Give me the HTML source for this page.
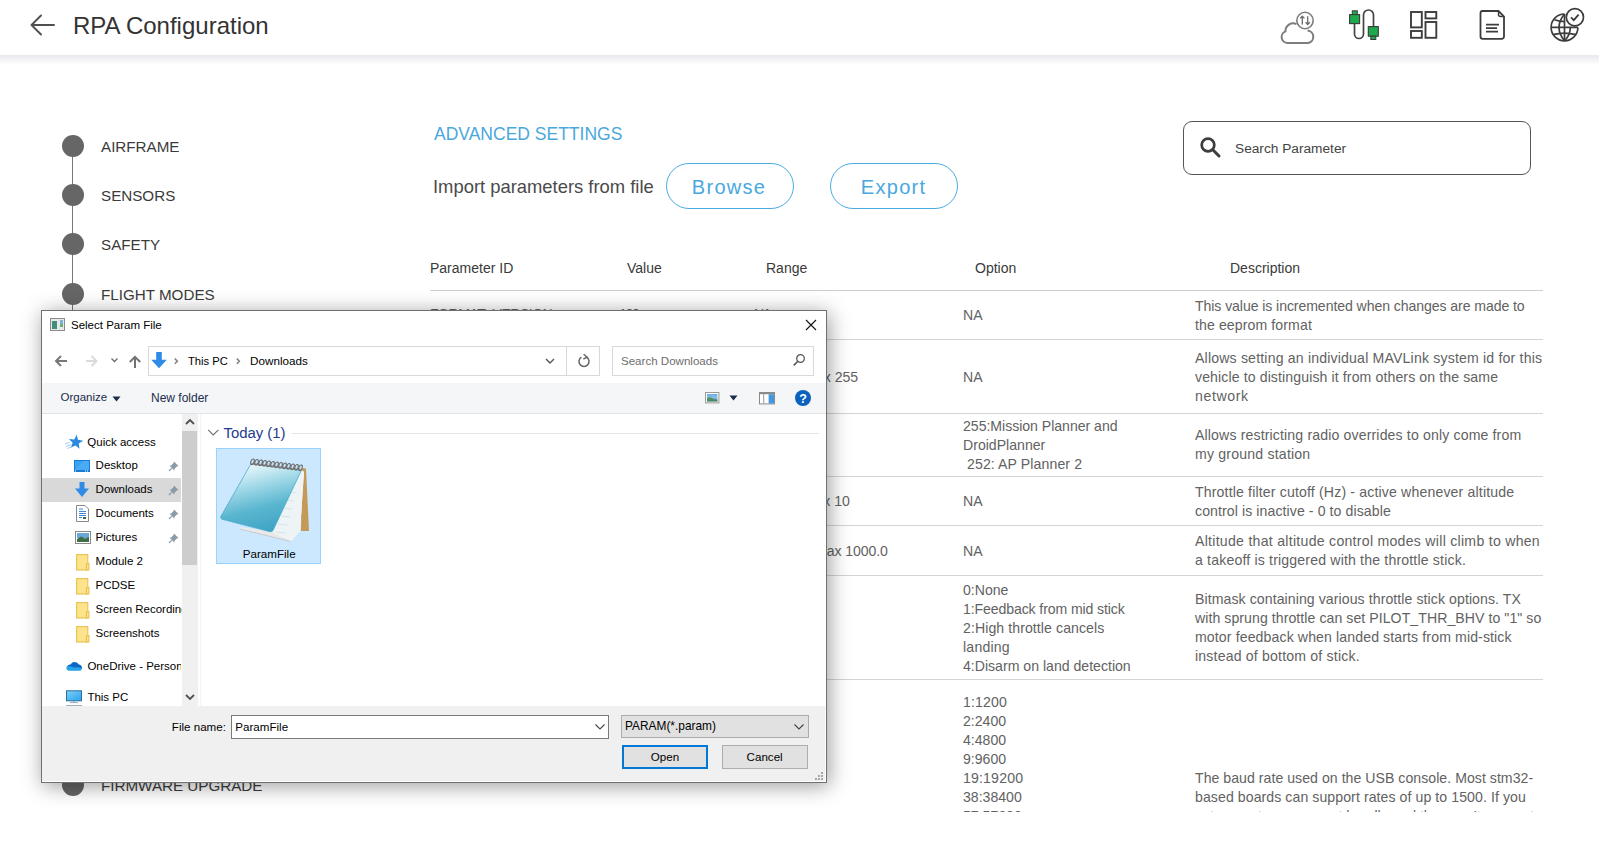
<!DOCTYPE html>
<html><head><meta charset="utf-8">
<style>
*{box-sizing:border-box}
html,body{margin:0;padding:0;width:1599px;height:863px;overflow:hidden;background:#fff;font-family:"Liberation Sans",sans-serif}
.t{position:absolute;line-height:1;white-space:nowrap}
#hdr{position:absolute;left:0;top:0;width:1599px;height:55px;background:#fff}
#hshadow{position:absolute;left:0;top:55px;width:1599px;height:10px;background:linear-gradient(#e8e8ee,#f1f1f5 40%,#fbfbfc 80%,#fff)}
.dot{position:absolute;left:62px;width:22px;height:22px;border-radius:50%;background:#666}
.vline{position:absolute;left:72px;width:1.2px;background:#777}
.side{font-size:15.2px;color:#3b3b3b;left:101px}
.hd{font-size:14px;color:#3a3a3a}
.c{font-size:14.1px;color:#626262}
.rl{position:absolute;left:430px;width:1113px;height:1px;background:#d4d4d4}
.d{font-size:11.5px;color:#000}
.pill{position:absolute;top:163px;height:46px;border:1.5px solid #4aaae0;border-radius:23px}
</style></head><body>
<div id="hdr"></div>
<div id="hshadow"></div>
<!-- back arrow -->
<svg style="position:absolute;left:28px;top:12px" width="30" height="28" viewBox="0 0 30 28">
<path d="M3.5 13H26 M13 3.5L3.5 13L13 22.5" fill="none" stroke="#505050" stroke-width="1.9" stroke-linecap="round" stroke-linejoin="round"/>
</svg>
<svg style="position:absolute;left:1270px;top:0" width="329" height="55" viewBox="1270 0 329 55">
<!-- cloud -->
<path d="M1288 43H1308A6.3 6.3 0 0 0 1307.5 30.5 M1296.5 24.2A7.6 7.6 0 0 0 1285.5 31.4A6 6 0 0 0 1288 43" fill="none" stroke="#7d7d7d" stroke-width="2"/>
<circle cx="1305" cy="20.5" r="8.2" fill="#fff" stroke="#7d7d7d" stroke-width="1.6"/>
<path d="M1302.3 24.5V16.2 M1300.2 18.4L1302.3 16.2L1304.4 18.4 M1307.7 16.2V24.5 M1305.6 22.3L1307.7 24.5L1309.8 22.3" fill="none" stroke="#6b6b6b" stroke-width="1.3"/>
<!-- cable -->
<path d="M1354.5 24V34A4.5 4.5 0 0 0 1363.5 34V15A5 5 0 0 1 1373.5 15V27" fill="none" stroke="#444" stroke-width="1.7"/>
<rect x="1352.3" y="10.8" width="5" height="4" fill="#1caa4c" stroke="#3a3a3a" stroke-width="1"/>
<rect x="1349.6" y="14.6" width="10" height="9" fill="#1caa4c" stroke="#3a3a3a" stroke-width="1.1"/>
<rect x="1368.3" y="26.6" width="10" height="9.6" fill="#1caa4c" stroke="#3a3a3a" stroke-width="1.1"/>
<rect x="1370.8" y="36.2" width="5" height="3.3" fill="#1caa4c" stroke="#3a3a3a" stroke-width="1"/>
<!-- dashboard -->
<g fill="none" stroke="#3d3d3d" stroke-width="1.9">
<rect x="1411" y="12" width="10.8" height="15.4"/>
<rect x="1411" y="31" width="10.8" height="6.8"/>
<rect x="1425.5" y="12" width="10.8" height="6.4"/>
<rect x="1425.5" y="22" width="10.8" height="15.8"/>
</g>
<!-- document -->
<path d="M1482.5 11H1498.5L1504 16.5V36.5A2.3 2.3 0 0 1 1501.7 38.8H1482.8A2.3 2.3 0 0 1 1480.5 36.5V13A2 2 0 0 1 1482.5 11Z" fill="none" stroke="#3d3d3d" stroke-width="1.8"/>
<path d="M1498.5 11V14.5A2 2 0 0 0 1500.5 16.5H1504" fill="none" stroke="#3d3d3d" stroke-width="1.5"/>
<path d="M1486 24.6H1499M1486 28.1H1497M1486 31.6H1498" stroke="#3d3d3d" stroke-width="1.6"/>
<!-- globe -->
<g fill="none" stroke="#3d3d3d" stroke-width="1.7">
<path d="M1564.5 14A13.4 13.4 0 1 0 1577.9 27.4"/>
<path d="M1564.5 14V40.8 M1551.1 27.4H1577.9"/>
<path d="M1564.5 14Q1553.5 27.4 1564.5 40.8"/>
<path d="M1570.3 27.4Q1570.3 35 1564.5 40.8"/>
<path d="M1554.5 19.8Q1559.5 21.6 1564.5 21.6"/>
<path d="M1553 34.6Q1564.5 31.5 1576 34.6"/>
</g>
<circle cx="1574.9" cy="17.3" r="8.6" fill="#fff" stroke="#3d3d3d" stroke-width="1.7"/>
<path d="M1571 17.4L1573.8 20.2L1578.6 14.6" fill="none" stroke="#3d3d3d" stroke-width="1.8"/>
</svg>
<div class="t" style="left:73px;top:14.3px;font-size:24px;color:#333">RPA Configuration</div>

<!-- sidebar -->
<div class="vline" style="top:150px;height:640px"></div>
<div class="dot" style="top:135px"></div>
<div class="dot" style="top:184px"></div>
<div class="dot" style="top:233.4px"></div>
<div class="dot" style="top:282.6px"></div>
<div class="dot" style="top:774px"></div>
<div class="t side" style="top:139px">AIRFRAME</div>
<div class="t side" style="top:188.2px">SENSORS</div>
<div class="t side" style="top:237.4px">SAFETY</div>
<div class="t side" style="top:286.6px">FLIGHT MODES</div>
<div class="t side" style="top:778px">FIRMWARE UPGRADE</div>

<!-- main -->
<div class="t" style="left:434px;top:125.7px;font-size:17.5px;color:#4aa8dc">ADVANCED SETTINGS</div>
<div class="t" style="left:433px;top:178.4px;font-size:18.4px;color:#4a4a4a">Import parameters from file</div>
<div class="pill" style="left:666px;width:128px"></div>
<div class="pill" style="left:830px;width:128px"></div>
<div class="t" style="left:691.8px;top:177px;font-size:20px;letter-spacing:1.3px;color:#49a8dd">Browse</div>
<div class="t" style="left:860.8px;top:177px;font-size:20px;letter-spacing:1.3px;color:#49a8dd">Export</div>

<div style="position:absolute;left:1183px;top:121px;width:348px;height:54px;border:1px solid #555;border-radius:9px"></div>
<svg style="position:absolute;left:1198px;top:136px" width="26" height="24" viewBox="0 0 26 24">
<circle cx="10" cy="9" r="6.3" fill="none" stroke="#3d3d3d" stroke-width="2.7"/>
<path d="M14.8 13.8L21 20" stroke="#3d3d3d" stroke-width="3" stroke-linecap="round"/>
</svg>
<div class="t" style="left:1235px;top:141.6px;font-size:13.7px;color:#444">Search Parameter</div>

<!-- table header -->
<div class="t hd" style="left:430px;top:260.8px">Parameter ID</div>
<div class="t hd" style="left:627px;top:260.8px">Value</div>
<div class="t hd" style="left:766px;top:260.8px">Range</div>
<div class="t hd" style="left:975px;top:260.8px">Option</div>
<div class="t hd" style="left:1230px;top:260.8px">Description</div>
<div class="rl" style="top:290px;background:#cfcfcf"></div>

<div id="rows" style="position:absolute;left:0;top:0;width:1599px;height:812px;overflow:hidden">
<div class="rl" style="top:339px"></div>
<div class="rl" style="top:413px"></div>
<div class="rl" style="top:476px"></div>
<div class="rl" style="top:525px"></div>
<div class="rl" style="top:575px"></div>
<div class="rl" style="top:679px"></div>
<div class="t c" style="left:430px;top:307.0px;letter-spacing:-0.533px">FORMAT_VERSION</div>
<div class="t c" style="left:619px;top:307.0px;letter-spacing:-1.358px">120</div>
<div class="t c" style="left:754px;top:307.0px;letter-spacing:-1.794px">NA</div>
<div class="t c" style="left:963px;top:308.0px">NA</div>
<div class="t c" style="left:1195px;top:298.8px;letter-spacing:-0.083px">This value is incremented when changes are made to</div>
<div class="t c" style="left:1195px;top:317.8px;letter-spacing:0.103px">the eeprom format</div>
<div class="t c" style="left:430px;top:370.1px">SYSID_THISMAV</div>
<div class="t c" style="left:627px;top:370.1px">1</div>
<div class="t c" style="left:766px;top:370.1px;letter-spacing:-0.020px">Min 1 Max 255</div>
<div class="t c" style="left:963px;top:370.1px">NA</div>
<div class="t c" style="left:1195px;top:350.9px;letter-spacing:0.179px">Allows setting an individual MAVLink system id for this</div>
<div class="t c" style="left:1195px;top:369.9px;letter-spacing:0.111px">vehicle to distinguish it from others on the same</div>
<div class="t c" style="left:1195px;top:388.9px;letter-spacing:0.607px">network</div>
<div class="t c" style="left:430px;top:437.8px">SYSID_MYGCS</div>
<div class="t c" style="left:627px;top:437.8px">255</div>
<div class="t c" style="left:766px;top:437.8px">NA</div>
<div class="t c" style="left:963px;top:418.8px;letter-spacing:-0.025px">255:Mission Planner and</div>
<div class="t c" style="left:963px;top:437.8px;letter-spacing:0.003px">DroidPlanner</div>
<div class="t c" style="left:963px;top:456.8px;letter-spacing:0.101px">&nbsp;252: AP Planner 2</div>
<div class="t c" style="left:1195px;top:428.2px;letter-spacing:0.145px">Allows restricting radio overrides to only come from</div>
<div class="t c" style="left:1195px;top:447.2px;letter-spacing:0.198px">my ground station</div>
<div class="t c" style="left:430px;top:493.8px">PILOT_THR_FILT</div>
<div class="t c" style="left:627px;top:493.8px">0</div>
<div class="t c" style="left:766px;top:493.8px;letter-spacing:-0.074px">Min 0 Max 10</div>
<div class="t c" style="left:963px;top:493.8px">NA</div>
<div class="t c" style="left:1195px;top:485.0px;letter-spacing:0.158px">Throttle filter cutoff (Hz) - active whenever altitude</div>
<div class="t c" style="left:1195px;top:504.0px;letter-spacing:0.093px">control is inactive - 0 to disable</div>
<div class="t c" style="left:430px;top:543.9px">PILOT_TKOFF_ALT</div>
<div class="t c" style="left:627px;top:543.9px">0</div>
<div class="t c" style="left:766px;top:543.9px;letter-spacing:-0.117px">Min 0.0 Max 1000.0</div>
<div class="t c" style="left:963px;top:543.9px">NA</div>
<div class="t c" style="left:1195px;top:534.0px;letter-spacing:0.276px">Altitude that altitude control modes will climb to when</div>
<div class="t c" style="left:1195px;top:553.0px;letter-spacing:0.171px">a takeoff is triggered with the throttle stick.</div>
<div class="t c" style="left:963px;top:582.7px;letter-spacing:-0.011px">0:None</div>
<div class="t c" style="left:963px;top:601.7px;letter-spacing:-0.112px">1:Feedback from mid stick</div>
<div class="t c" style="left:963px;top:620.7px;letter-spacing:0.084px">2:High throttle cancels</div>
<div class="t c" style="left:963px;top:639.7px;letter-spacing:0.205px">landing</div>
<div class="t c" style="left:963px;top:658.7px;letter-spacing:0.002px">4:Disarm on land detection</div>
<div class="t c" style="left:1195px;top:591.9px;letter-spacing:0.081px">Bitmask containing various throttle stick options. TX</div>
<div class="t c" style="left:1195px;top:610.9px;letter-spacing:0.066px">with sprung throttle can set PILOT_THR_BHV to "1" so</div>
<div class="t c" style="left:1195px;top:629.9px;letter-spacing:0.119px">motor feedback when landed starts from mid-stick</div>
<div class="t c" style="left:1195px;top:648.9px;letter-spacing:0.184px">instead of bottom of stick.</div>
<div class="t c" style="left:430px;top:620.5px">PILOT_THR_BHV</div>
<div class="t c" style="left:627px;top:620.5px">0</div>
<div class="t c" style="left:766px;top:620.5px">NA</div>
<div class="t c" style="left:963px;top:694.7px;letter-spacing:0.158px">1:1200</div>
<div class="t c" style="left:963px;top:713.7px">2:2400</div>
<div class="t c" style="left:963px;top:732.7px">4:4800</div>
<div class="t c" style="left:963px;top:751.7px">9:9600</div>
<div class="t c" style="left:963px;top:770.7px;letter-spacing:0.172px">19:19200</div>
<div class="t c" style="left:963px;top:789.7px">38:38400</div>
<div class="t c" style="left:963px;top:808.7px">57:57600</div>
<div class="t c" style="left:963px;top:827.7px">111:111100</div>
<div class="t c" style="left:1195px;top:770.7px;letter-spacing:0.041px">The baud rate used on the USB console. Most stm32-</div>
<div class="t c" style="left:1195px;top:789.7px;letter-spacing:0.080px">based boards can support rates of up to 1500. If you</div>
<div class="t c" style="left:1195px;top:808.7px">setup a rate you cannot handle and then can't connect</div>
<div class="t c" style="left:430px;top:747.5px">SERIAL0_BAUD</div>
<div class="t c" style="left:627px;top:747.5px">115</div>
<div class="t c" style="left:766px;top:747.5px">NA</div>
</div>

<div id="dlg">
<div style="position:absolute;left:41px;top:310px;width:786px;height:473px;background:#fff;border:1px solid #707070;box-shadow:2px 3px 20px rgba(0,0,0,0.4)"></div>
<!-- title icon -->
<svg style="position:absolute;left:50px;top:318px" width="16" height="14" viewBox="0 0 16 14">
<rect x="0.5" y="0.5" width="14" height="12" fill="#e8e8e8" stroke="#8c8c8c"/>
<rect x="2" y="3" width="5" height="8" fill="#3f8f7a"/>
<rect x="10" y="2" width="3" height="4" fill="#7fb0d8"/>
<rect x="10" y="6" width="3" height="3" fill="#6cb46c"/>
</svg>
<div class="t d" style="left:71px;top:320.1px">Select Param File</div>
<svg style="position:absolute;left:805px;top:319px" width="12" height="12" viewBox="0 0 12 12">
<path d="M1 1L11 11M11 1L1 11" stroke="#111" stroke-width="1.1"/>
</svg>
<!-- nav arrows -->
<svg style="position:absolute;left:54px;top:353px" width="90" height="16" viewBox="0 0 90 16">
<path d="M2.5 8H13 M7 3L2 8L7 13" fill="none" stroke="#787878" stroke-width="2"/>
<path d="M32 8H42.5 M37.5 3L42.5 8L37.5 13" fill="none" stroke="#dadada" stroke-width="2"/>
<path d="M57.5 5.5L60.5 8.5L63.5 5.5" fill="none" stroke="#6d6d6d" stroke-width="1.3"/>
<path d="M81 15V4 M75.8 9L81 3.8L86.2 9" fill="none" stroke="#727272" stroke-width="2"/>
</svg>
<!-- address bar -->
<div style="position:absolute;left:148px;top:346px;width:452px;height:30px;border:1px solid #d9d9d9;background:#fff"></div>
<div style="position:absolute;left:566px;top:347px;width:1px;height:28px;background:#d9d9d9"></div>
<svg style="position:absolute;left:150px;top:351px" width="18" height="18" viewBox="0 0 18 18">
<path d="M6.2 1H11.8V8.8H16.8L9 17.2L1.2 8.8H6.2Z" fill="#2f8be6"/>
</svg>
<svg style="position:absolute;left:172px;top:356px" width="8" height="10" viewBox="0 0 8 10"><path d="M2.8 2.6L5.4 5.2L2.8 7.8" fill="none" stroke="#808080" stroke-width="1.5"/></svg>
<div class="t d" style="left:188px;top:356px;font-size:11.2px">This PC</div>
<svg style="position:absolute;left:234px;top:356px" width="8" height="10" viewBox="0 0 8 10"><path d="M2.8 2.6L5.4 5.2L2.8 7.8" fill="none" stroke="#808080" stroke-width="1.5"/></svg>
<div class="t d" style="left:250px;top:355.3px;font-size:11.7px">Downloads</div>
<svg style="position:absolute;left:544px;top:356px" width="12" height="10" viewBox="0 0 12 10"><path d="M2 3L6 7L10 3" fill="none" stroke="#555" stroke-width="1.4"/></svg>
<svg style="position:absolute;left:576px;top:353px" width="16" height="16" viewBox="0 0 16 16">
<path d="M10.6 4.2A5 5 0 1 1 5.4 4.2" fill="none" stroke="#666" stroke-width="1.5"/>
<path d="M7.6 1.2L11.2 4.1L7.4 6" fill="none" stroke="#666" stroke-width="1.4"/>
</svg>
<!-- search -->
<div style="position:absolute;left:612px;top:346px;width:202px;height:30px;border:1px solid #d9d9d9;background:#fff"></div>
<div class="t d" style="left:621px;top:356px;color:#6d6d6d;font-size:11.55px">Search Downloads</div>
<svg style="position:absolute;left:792px;top:353px" width="14" height="15" viewBox="0 0 14 15">
<circle cx="8.5" cy="5.5" r="3.8" fill="none" stroke="#555" stroke-width="1.3"/>
<path d="M5.8 8.2L1.8 12.4" stroke="#555" stroke-width="1.6"/>
</svg>
<!-- toolbar -->
<div style="position:absolute;left:42px;top:383px;width:784px;height:31px;background:#f5f6f7;border-bottom:1px solid #e3e3e3"></div>
<div class="t d" style="left:60.5px;top:392.3px;color:#1b2c4e;font-size:11.5px">Organize</div>
<svg style="position:absolute;left:112px;top:396px" width="9" height="6" viewBox="0 0 9 6"><path d="M0.5 0.5H8.5L4.5 5.5Z" fill="#1b2c4e"/></svg>
<div class="t d" style="left:151px;top:392.3px;color:#1b2c4e;font-size:12px">New folder</div>
<svg style="position:absolute;left:705px;top:392px" width="15" height="12" viewBox="0 0 15 12">
<defs><linearGradient id="vg" x1="0" y1="0" x2="0" y2="1"><stop offset="0" stop-color="#6aaee8"/><stop offset="0.5" stop-color="#8cc0e0"/><stop offset="1" stop-color="#2f6ea8"/></linearGradient></defs>
<rect x="0.5" y="0.5" width="13.4" height="10.4" fill="#fff" stroke="#9a9a9a"/>
<rect x="2" y="2" width="10.4" height="7.4" fill="url(#vg)"/>
<path d="M2 6Q5 4.5 8 6.5T12.4 7.5V9.4H2Z" fill="#4f8a5a" opacity="0.85"/>
</svg>
<svg style="position:absolute;left:729px;top:395px" width="9" height="6" viewBox="0 0 9 6"><path d="M0.5 0.5H8.5L4.5 5.5Z" fill="#1b2c4e"/></svg>
<svg style="position:absolute;left:759px;top:392px" width="17" height="13" viewBox="0 0 17 13">
<rect x="0.5" y="0.5" width="15" height="11.4" fill="#fff" stroke="#8a8a8a"/>
<rect x="1" y="1" width="14" height="1.2" fill="#8a8a8a"/>
<rect x="4.2" y="2" width="1" height="9.5" fill="#9a9a9a"/>
<rect x="9.6" y="2.2" width="5.4" height="9.3" fill="#4598e0"/>
</svg>
<svg style="position:absolute;left:794px;top:389px" width="18" height="18" viewBox="0 0 18 18">
<circle cx="9" cy="9" r="8" fill="#0a62bf"/>
<text x="9" y="13.6" text-anchor="middle" font-family="Liberation Sans" font-weight="bold" font-size="12.5" fill="#fff">?</text>
</svg>
<!-- nav pane -->
<div style="position:absolute;left:42px;top:478px;width:139px;height:24px;background:#d9d9d9"></div>
<div style="position:absolute;left:182px;top:414px;width:16px;height:292px;background:#f0f0f0"></div>
<div style="position:absolute;left:182px;top:431px;width:15px;height:134px;background:#cdcdcd"></div>
<div style="position:absolute;left:200px;top:414px;width:1px;height:292px;background:#f3f3f3"></div>
<svg style="position:absolute;left:184px;top:417px" width="12" height="10" viewBox="0 0 12 10"><path d="M2 7L6 3L10 7" fill="none" stroke="#505050" stroke-width="1.8"/></svg>
<svg style="position:absolute;left:184px;top:692px" width="12" height="10" viewBox="0 0 12 10"><path d="M2 3L6 7L10 3" fill="none" stroke="#505050" stroke-width="1.8"/></svg>

<svg style="position:absolute;left:64px;top:432px" width="22" height="20" viewBox="64 432 22 20">
<path d="M76.71 434.65L77.98 439.85L83.26 440.73L78.70 443.55L79.50 448.84L75.42 445.38L70.63 447.77L72.66 442.82L68.91 439.00L74.24 439.40Z" fill="#2a8ae0"/>
<path d="M66 446.5L71 444.5M67.5 448.5L72 446.5M65 444L69.5 442.3" stroke="#8cc2ef" stroke-width="0.9"/>
</svg>
<div class="t d" style="left:87.3px;top:436.5px">Quick access</div>
<svg style="position:absolute;left:74px;top:460px" width="17" height="13" viewBox="0 0 17 13">
<rect x="0" y="0" width="16" height="12" fill="#1a7ad8"/>
<rect x="1" y="1" width="14" height="9" fill="#3aa0f0"/>
<path d="M1 10L9 1H15V10Z" fill="#52b2f6" opacity="0.6"/>
<rect x="1" y="10.5" width="1" height="1" fill="#fff"/><rect x="13" y="10.5" width="1" height="1" fill="#fff"/><rect x="11" y="10.5" width="1" height="1" fill="#fff"/>
</svg>
<div class="t d" style="left:95.6px;top:460.1px">Desktop</div>
<svg style="position:absolute;left:74px;top:482px" width="16" height="16" viewBox="0 0 16 16">
<path d="M5.5 0H10.5V6.5H15L8 15L1 6.5H5.5Z" fill="#2f8be6"/>
</svg>
<div class="t d" style="left:95.6px;top:484.1px">Downloads</div>
<svg style="position:absolute;left:75.5px;top:505px" width="13" height="17" viewBox="0 0 13 17">
<path d="M0.5 0.5H9L12.5 4V16.5H0.5Z" fill="#fff" stroke="#8a8a8a"/>
<path d="M3 4H7M3 6.5H10M3 8.5H10M3 10.5H10M3 12.5H6" stroke="#3a8ad8" stroke-width="1"/>
<rect x="7" y="12" width="3" height="2" fill="#3d6a3d"/>
</svg>
<div class="t d" style="left:95.6px;top:508.1px">Documents</div>
<svg style="position:absolute;left:75px;top:531px" width="16" height="14" viewBox="0 0 16 14">
<rect x="0.5" y="0.5" width="15" height="12" fill="#fff" stroke="#8a8a8a"/>
<rect x="2" y="2" width="12" height="5" fill="#6aa8d8"/>
<path d="M2 8L6 5.5L10 7.5L14 6V11H2Z" fill="#3f6e4a"/>
</svg>
<div class="t d" style="left:95.6px;top:532.1px">Pictures</div>
<!-- pins -->
<svg style="position:absolute;left:168px;top:459.5px" width="12" height="84" viewBox="0 0 12 84">
<g id="pin"><path d="M6 1.5L10.5 6L8.8 6.6L6.6 8.8L6.2 10.4L1.6 5.8L3.2 5.4L5.4 3.2Z" fill="#8b9aa4"/><path d="M3.6 8.4L1 11" stroke="#8b9aa4" stroke-width="1.2"/></g>
<use href="#pin" y="24"/><use href="#pin" y="48"/><use href="#pin" y="72"/>
</svg>
<!-- folders -->
<svg style="position:absolute;left:76px;top:553.5px" width="14" height="89" viewBox="0 0 14 89">
<g id="fold"><rect x="0.6" y="0.6" width="11.2" height="15.4" fill="#fde38c" stroke="#e8c24e" stroke-width="1.1"/><rect x="10.4" y="9.6" width="2.6" height="6.4" fill="#fbe08a" stroke="#e8c24e" stroke-width="1"/></g>
<use href="#fold" y="24"/><use href="#fold" y="48"/><use href="#fold" y="72"/>
</svg>
<div class="t d" style="left:95.6px;top:556.1px">Module 2</div>
<div class="t d" style="left:95.6px;top:580.1px">PCDSE</div>
<div style="position:absolute;left:95.6px;top:600px;width:86px;height:20px;overflow:hidden"><div class="t d" style="left:0;top:4.1px">Screen Recordings</div></div>
<div class="t d" style="left:95.6px;top:628.1px">Screenshots</div>
<svg style="position:absolute;left:66px;top:660px" width="17" height="12" viewBox="0 0 17 12">
<path d="M2.8 10.8A2.6 2.6 0 0 1 1.2 6.3A3.6 3.6 0 0 1 5.5 5.2A4 4 0 0 1 11.5 6.2A2.6 2.6 0 0 1 15.9 8.4A2.4 2.4 0 0 1 13.8 10.8Z" fill="#28a4ea"/>
<path d="M1.2 6.3A3.6 3.6 0 0 1 4.6 4.4A4.6 4.6 0 0 1 12.8 4.6A3.2 3.2 0 0 1 15.9 8.2Q12 6.6 8.5 7.6Q4.5 6.2 1.2 6.3Z" fill="#0c66c4"/>
</svg>
<div style="position:absolute;left:87.4px;top:656px;width:94px;height:20px;overflow:hidden"><div class="t d" style="left:0;top:4.6px">OneDrive - Personal</div></div>
<svg style="position:absolute;left:66px;top:690px" width="17" height="17" viewBox="0 0 17 17">
<defs><linearGradient id="mon" x1="0" y1="0" x2="1" y2="1"><stop offset="0" stop-color="#7fd0fb"/><stop offset="1" stop-color="#2aa2ee"/></linearGradient></defs>
<rect x="0.5" y="0.8" width="15" height="10" fill="url(#mon)" stroke="#2a6f9e" stroke-width="1"/>
<rect x="7" y="11.3" width="2" height="1" fill="#8fa6b8"/>
<rect x="4" y="12.2" width="8" height="0.9" fill="#8fa6b8"/>
<rect x="0.2" y="15" width="16" height="1" fill="#9fb2c2"/>
</svg>
<div class="t d" style="left:87.4px;top:692.1px">This PC</div>
<!-- content pane -->
<svg style="position:absolute;left:207px;top:428px" width="13" height="9" viewBox="0 0 13 9"><path d="M1.2 1.8L6.2 7L11.4 1.8" fill="none" stroke="#6d6d6d" stroke-width="1.1"/></svg>
<div class="t" style="left:223.5px;top:425.8px;font-size:14.9px;color:#1e3c8c">Today (1)</div>
<div style="position:absolute;left:292px;top:433px;width:527px;height:1px;background:#e5e5e5"></div>
<div style="position:absolute;left:216px;top:448px;width:105px;height:116px;background:#cce8ff;border:1px solid #99d1ff"></div>
<svg style="position:absolute;left:215px;top:450px" width="110" height="100" viewBox="215 450 110 100">
<defs>
<linearGradient id="cov" x1="0.3" y1="0" x2="0.6" y2="1">
<stop offset="0" stop-color="#f2fafc"/><stop offset="0.3" stop-color="#a8dcea"/><stop offset="0.65" stop-color="#5ab6d0"/><stop offset="1" stop-color="#3ea3c4"/>
</linearGradient>
<linearGradient id="pg" x1="0" y1="0" x2="1" y2="0">
<stop offset="0" stop-color="#e6eef2"/><stop offset="1" stop-color="#fafafa"/>
</linearGradient>
</defs>
<path d="M302 468L306 468.5L309 531L301 531Z" fill="#c49a58"/>
<path d="M301.5 470L304 472L300 531L291 541.5L240 529L239 527L271.8 531.7Z" fill="url(#pg)"/>
<path d="M301.5 470L271.8 531.7L291 541.5L300 531L304 472Z" fill="#eef3f5"/>
<path d="M290 492L296 493M287 500L294 501M284 508L292 509M281 516L290 517M278 524L288 525M276 532L286 533" stroke="#c9dde6" stroke-width="0.7"/>
<path d="M239 527L271.8 531.7L291 541.5Z" fill="#e9e9e9"/><path d="M240 529L291 541.5" stroke="#c8c8c8" stroke-width="1"/>
<path d="M250.9 463.9L301.4 470.3L273 530.5Q271.8 532.2 269.5 531.6L222 519.2Q219.8 518.4 221 516.2Z" fill="url(#cov)"/>
<path d="M250.9 463.9L301.4 470.3L273 530.5Q271.8 532.2 269.5 531.6L222 519.2Q219.8 518.4 221 516.2Z" fill="none" stroke="#4aaacb" stroke-width="0.8"/>
<path d="M252 463.6L301.5 469.8" stroke="#9a9a9a" stroke-width="1.6"/>
<ellipse cx="252.50" cy="461.80" rx="1.6" ry="2.9" transform="rotate(20 252.50 461.80)" fill="none" stroke="#6a6a6a" stroke-width="1.1"/>
<ellipse cx="256.50" cy="462.30" rx="1.6" ry="2.9" transform="rotate(20 256.50 462.30)" fill="none" stroke="#6a6a6a" stroke-width="1.1"/>
<ellipse cx="260.50" cy="462.80" rx="1.6" ry="2.9" transform="rotate(20 260.50 462.80)" fill="none" stroke="#6a6a6a" stroke-width="1.1"/>
<ellipse cx="264.50" cy="463.30" rx="1.6" ry="2.9" transform="rotate(20 264.50 463.30)" fill="none" stroke="#6a6a6a" stroke-width="1.1"/>
<ellipse cx="268.50" cy="463.80" rx="1.6" ry="2.9" transform="rotate(20 268.50 463.80)" fill="none" stroke="#6a6a6a" stroke-width="1.1"/>
<ellipse cx="272.50" cy="464.30" rx="1.6" ry="2.9" transform="rotate(20 272.50 464.30)" fill="none" stroke="#6a6a6a" stroke-width="1.1"/>
<ellipse cx="276.50" cy="464.80" rx="1.6" ry="2.9" transform="rotate(20 276.50 464.80)" fill="none" stroke="#6a6a6a" stroke-width="1.1"/>
<ellipse cx="280.50" cy="465.30" rx="1.6" ry="2.9" transform="rotate(20 280.50 465.30)" fill="none" stroke="#6a6a6a" stroke-width="1.1"/>
<ellipse cx="284.50" cy="465.80" rx="1.6" ry="2.9" transform="rotate(20 284.50 465.80)" fill="none" stroke="#6a6a6a" stroke-width="1.1"/>
<ellipse cx="288.50" cy="466.30" rx="1.6" ry="2.9" transform="rotate(20 288.50 466.30)" fill="none" stroke="#6a6a6a" stroke-width="1.1"/>
<ellipse cx="292.50" cy="466.80" rx="1.6" ry="2.9" transform="rotate(20 292.50 466.80)" fill="none" stroke="#6a6a6a" stroke-width="1.1"/>
<ellipse cx="296.50" cy="467.30" rx="1.6" ry="2.9" transform="rotate(20 296.50 467.30)" fill="none" stroke="#6a6a6a" stroke-width="1.1"/>
<ellipse cx="300.50" cy="467.80" rx="1.6" ry="2.9" transform="rotate(20 300.50 467.80)" fill="none" stroke="#6a6a6a" stroke-width="1.1"/>
</svg>
<div class="t d" style="left:242.8px;top:548.3px;font-size:11.6px">ParamFile</div>
<!-- bottom panel -->
<div style="position:absolute;left:42px;top:706px;width:783px;height:75px;background:#f0f0f0"></div>
<div class="t d" style="left:171.8px;top:720.6px;font-size:11.6px">File name:</div>
<div style="position:absolute;left:231px;top:715px;width:378px;height:24px;background:#fff;border:1px solid #7a7a7a"></div>
<div class="t d" style="left:235.3px;top:720.8px;font-size:11.6px">ParamFile</div>
<svg style="position:absolute;left:594px;top:722px" width="12" height="10" viewBox="0 0 12 10"><path d="M1.5 2.5L6 7L10.5 2.5" fill="none" stroke="#444" stroke-width="1.1"/></svg>
<div style="position:absolute;left:621px;top:715px;width:188px;height:23px;background:#e1e1e1;border:1px solid #adadad"></div>
<div class="t d" style="left:625px;top:720.6px;font-size:11.9px">PARAM(*.param)</div>
<svg style="position:absolute;left:793px;top:722px" width="12" height="10" viewBox="0 0 12 10"><path d="M1.5 2.5L6 7L10.5 2.5" fill="none" stroke="#444" stroke-width="1.1"/></svg>
<div style="position:absolute;left:622px;top:745px;width:86px;height:24px;background:#e1e1e1;border:2px solid #0078d7"></div>
<div class="t d" style="left:650.8px;top:750.8px;font-size:11.6px">Open</div>
<div style="position:absolute;left:722px;top:745px;width:86px;height:24px;background:#e1e1e1;border:1px solid #adadad"></div>
<div class="t d" style="left:746.6px;top:750.8px;font-size:11.6px">Cancel</div>
<svg style="position:absolute;left:814px;top:771px" width="10" height="10" viewBox="0 0 10 10">
<rect x="7" y="1" width="2" height="2" fill="#a8a8a8"/><rect x="4" y="4" width="2" height="2" fill="#a8a8a8"/><rect x="7" y="4" width="2" height="2" fill="#a8a8a8"/>
<rect x="1" y="7" width="2" height="2" fill="#a8a8a8"/><rect x="4" y="7" width="2" height="2" fill="#a8a8a8"/><rect x="7" y="7" width="2" height="2" fill="#a8a8a8"/>
</svg>
</div>
</body></html>
